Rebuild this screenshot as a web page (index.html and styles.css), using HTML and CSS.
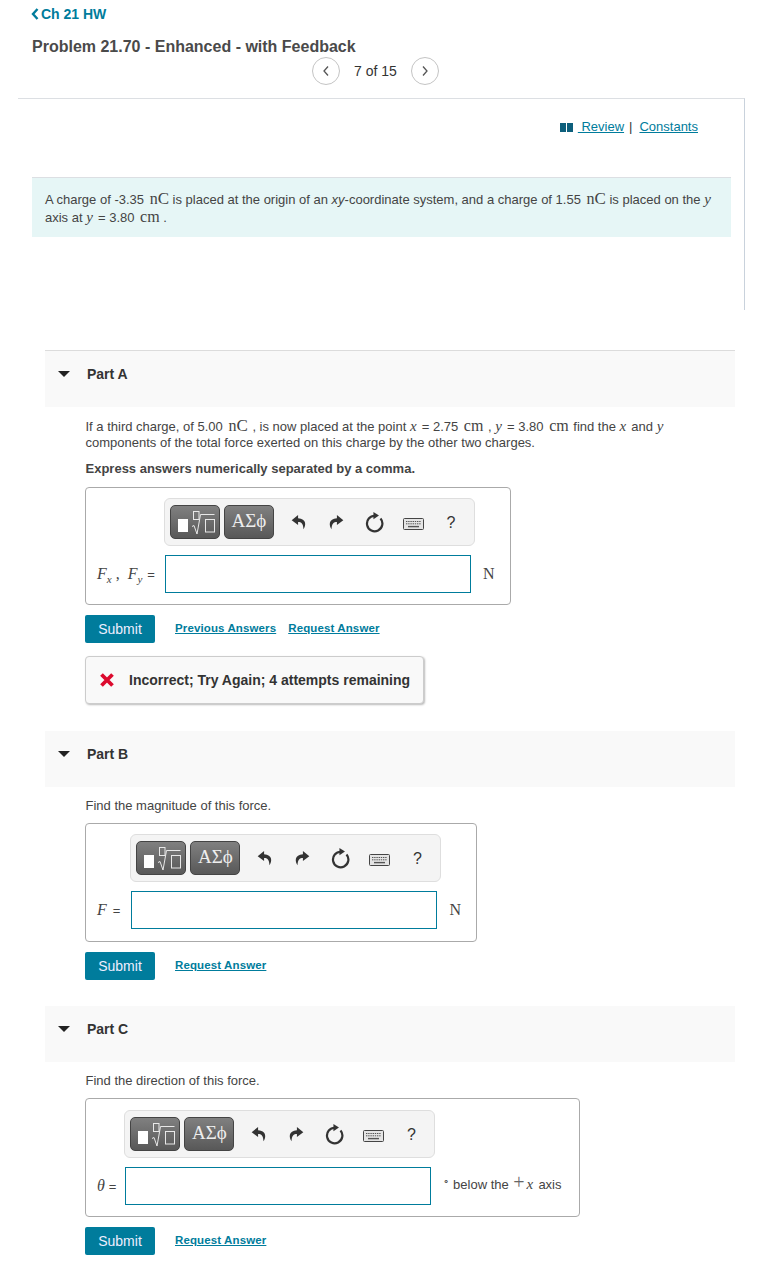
FILE: index.html
```html
<!DOCTYPE html>
<html lang="en">
<head>
<meta charset="UTF-8" />
<meta name="viewport" content="width=device-width, initial-scale=1.0">
<title>Problem 21.70 - Enhanced - with Feedback</title>
<link rel="stylesheet" href="styles.css">
</head>
<body>

<svg class="sprites" width="0" height="0">
  <symbol id="icon-math" viewBox="0 0 50 34">
    <rect x="8" y="14" width="10" height="13" fill="#fff"/>
    <rect x="23.5" y="6.5" width="5.5" height="8" fill="none" stroke="#e8e8e8"/>
    <path d="M22 21.5 L24 20.5 L27 29 L30.5 9.5 H44.5" fill="none" stroke="#e8e8e8"/>
    <rect x="35.5" y="14.5" width="9" height="12.5" fill="none" stroke="#e8e8e8"/>
  </symbol>
  <symbol id="icon-undo" viewBox="0 0 14 14">
    <path d="M6.2 .8 L.6 5.4 L6.2 9.6 V7 C9 7 10.8 8.6 10.9 13.4 C13.2 10.2 13.8 4.2 6.2 3.8 Z" fill="#333"/>
  </symbol>
  <symbol id="icon-redo" viewBox="0 0 14 14">
    <path d="M7.8 .8 L13.4 5.4 L7.8 9.6 V7 C5 7 3.2 8.6 3.1 13.4 C.8 10.2 .2 4.2 7.8 3.8 Z" fill="#333"/>
  </symbol>
  <symbol id="icon-reset" viewBox="0 0 20 20">
    <path d="M15 6.8 A7 7 0 1 1 10 4.4" fill="none" stroke="#333" stroke-width="2"/>
    <path d="M8.6 .8 L13.6 4.2 L8.6 7.6 Z" fill="#333"/>
  </symbol>
  <symbol id="icon-keyboard" viewBox="0 0 21 12">
    <rect x=".5" y=".5" width="20" height="11" rx="1" fill="#e4e4e4" stroke="#444"/>
    <path d="M3 3.5 H18 M3 5.8 H18" stroke="#555" stroke-dasharray="1.4 .8"/>
    <path d="M5 8.6 H16" stroke="#555" stroke-width="1.4"/>
  </symbol>
</svg>

<a class="back-link" href="#">
  <svg width="8" height="12" viewBox="0 0 8 12"><path d="M6.5 1 L2 6 L6.5 11" fill="none" stroke="#007c9c" stroke-width="2.4"/></svg>Ch 21 HW
</a>
<h1 class="problem-title">Problem 21.70 - Enhanced - with Feedback</h1>

<div class="pager">
  <span class="pager-btn">
    <svg width="8" height="12" viewBox="0 0 8 12"><path d="M6 1.5 L2 6 L6 10.5" fill="none" stroke="#555" stroke-width="1.3"/></svg>
  </span>
  <span class="pager-text">7 of 15</span>
  <span class="pager-btn">
    <svg width="8" height="12" viewBox="0 0 8 12"><path d="M2 1.5 L6 6 L2 10.5" fill="none" stroke="#555" stroke-width="1.3"/></svg>
  </span>
</div>

<div class="intro-panel">
  <div class="resources">
    <a href="#"><svg class="book" width="13" height="9" viewBox="0 0 13 9"><path d="M0 0 H6 V9 H0 Z M7 0 H13 V9 H7 Z" fill="#0d5f7c"/></svg> Review</a><span class="sep">|</span><a href="#">Constants</a>
  </div>
  <div class="intro-text">
    A charge of -3.35 <span class="unit">n<span class="big">C</span></span> is placed at the origin of an <i>xy</i>-coordinate system, and a charge of 1.55 <span class="unit">n<span class="big">C</span></span> is placed on the <i class="var">y</i> axis at <i class="var">y</i> = 3.80 <span class="unit">cm</span> .
  </div>
</div>

<section class="part part-first">
  <div class="part-head"><span class="caret"></span>Part A</div>
  <div class="part-body">
    <p class="question">If a third charge, of 5.00 <span class="unit">n<span class="big">C</span></span> , is now placed at the point <i class="var">x</i> = 2.75 <span class="unit">cm</span> , <i class="var">y</i> = 3.80 <span class="unit">cm</span> find the <i class="var">x</i> and <i class="var">y</i> components of the total force exerted on this charge by the other two charges.</p>
    <p class="hint">Express answers numerically separated by a comma.</p>

    <div class="answer answer-a">
      <div class="toolbar">
        <span class="tool-btn"><svg width="50" height="34"><use href="#icon-math"/></svg></span>
        <span class="tool-btn tool-greek">ΑΣϕ</span>
        <span class="tool-icon tool-undo"><svg width="16" height="16"><use href="#icon-undo"/></svg></span>
        <span class="tool-icon"><svg width="16" height="16"><use href="#icon-redo"/></svg></span>
        <span class="tool-icon tool-reset"><svg width="22" height="22"><use href="#icon-reset"/></svg></span>
        <span class="tool-icon tool-keys"><svg width="21" height="12"><use href="#icon-keyboard"/></svg></span>
        <span class="tool-icon tool-help">?</span>
      </div>
      <label class="answer-label"><i>F<sub>x</sub></i> ,&nbsp; <i>F<sub>y</sub></i> <span class="eq">=</span></label>
      <input class="answer-input" type="text">
      <span class="answer-unit"><span class="unit">N</span></span>
    </div>

    <div class="actions">
      <button class="submit">Submit</button>
      <a class="action-link" href="#">Previous Answers</a>
      <a class="action-link" href="#">Request Answer</a>
    </div>

    <div class="feedback">
      <svg width="14" height="14" viewBox="0 0 14 14"><path d="M1.5 1.5 L12.5 12.5 M12.5 1.5 L1.5 12.5" stroke="#dc0a2e" stroke-width="3.8"/></svg>
      Incorrect; Try Again; 4 attempts remaining
    </div>
  </div>
</section>

<section class="part">
  <div class="part-head"><span class="caret"></span>Part B</div>
  <div class="part-body">
    <p class="question">Find the magnitude of this force.</p>

    <div class="answer answer-b">
      <div class="toolbar">
        <span class="tool-btn"><svg width="50" height="34"><use href="#icon-math"/></svg></span>
        <span class="tool-btn tool-greek">ΑΣϕ</span>
        <span class="tool-icon tool-undo"><svg width="16" height="16"><use href="#icon-undo"/></svg></span>
        <span class="tool-icon"><svg width="16" height="16"><use href="#icon-redo"/></svg></span>
        <span class="tool-icon tool-reset"><svg width="22" height="22"><use href="#icon-reset"/></svg></span>
        <span class="tool-icon tool-keys"><svg width="21" height="12"><use href="#icon-keyboard"/></svg></span>
        <span class="tool-icon tool-help">?</span>
      </div>
      <label class="answer-label"><i>F</i> <span class="eq">=</span></label>
      <input class="answer-input" type="text">
      <span class="answer-unit"><span class="unit">N</span></span>
    </div>

    <div class="actions">
      <button class="submit">Submit</button>
      <a class="action-link" href="#">Request Answer</a>
    </div>
  </div>
</section>

<section class="part">
  <div class="part-head"><span class="caret"></span>Part C</div>
  <div class="part-body">
    <p class="question">Find the direction of this force.</p>

    <div class="answer answer-c">
      <div class="toolbar">
        <span class="tool-btn"><svg width="50" height="34"><use href="#icon-math"/></svg></span>
        <span class="tool-btn tool-greek">ΑΣϕ</span>
        <span class="tool-icon tool-undo"><svg width="16" height="16"><use href="#icon-undo"/></svg></span>
        <span class="tool-icon"><svg width="16" height="16"><use href="#icon-redo"/></svg></span>
        <span class="tool-icon tool-reset"><svg width="22" height="22"><use href="#icon-reset"/></svg></span>
        <span class="tool-icon tool-keys"><svg width="21" height="12"><use href="#icon-keyboard"/></svg></span>
        <span class="tool-icon tool-help">?</span>
      </div>
      <label class="answer-label"><i>θ</i> <span class="eq">=</span></label>
      <input class="answer-input" type="text">
      <span class="answer-unit answer-unit-text"><sup class="deg">∘</sup> below the <span class="unit plus">+</span><i class="var">x</i> axis</span>
    </div>

    <div class="actions">
      <button class="submit">Submit</button>
      <a class="action-link" href="#">Request Answer</a>
    </div>
  </div>
</section>

</body>
</html>
```

FILE: styles.css
```css
body {
  font-family: 'Liberation Sans', Arial, sans-serif;
  font-size: 13px;
  line-height: 17px;
  color: #444;
  background: #fff;
  margin: 0;
  padding: 0 0 31px;
}

a {
  color: #007c9c;
}

.sprites {
  display: block;
  height: 0;
}

.back-link {
  display: flex;
  align-items: center;
  gap: 2px;
  height: 16px;
  margin: 6px 0 0 31px;
  font-size: 14px;
  font-weight: bold;
  text-decoration: none;
}

.problem-title {
  margin: 15px 0 0 32px;
  font-size: 16px;
  line-height: 20px;
  font-weight: bold;
  color: #4a4a4a;
}

.pager {
  display: flex;
  align-items: center;
  height: 28px;
  margin: 0 0 0 312px;
}

.pager-btn {
  display: flex;
  align-items: center;
  justify-content: center;
  box-sizing: border-box;
  width: 28px;
  height: 28px;
  border: 1px solid #c4c4c4;
  border-radius: 50%;
}

.pager-text {
  width: 71px;
  text-align: center;
  font-size: 14px;
  color: #333;
}

.intro-panel {
  box-sizing: border-box;
  width: 727px;
  height: 212px;
  margin: 13px 0 0 18px;
  padding: 0 13px 0 14px;
  border-top: 1px solid #dcdfe3;
  border-right: 1px solid #c9d2dc;
}

.resources {
  margin: 19px 33px 0 0;
  text-align: right;
  color: #333;
}

.book {
  margin-right: 5px;
  vertical-align: -0.5px;
}

.sep {
  margin: 0 7px 0 5px;
}

.intro-text {
  height: 60px;
  margin-top: 42px;
  padding: 12px 13px 0;
  box-sizing: border-box;
  background: #e6f6f6;
  border-top: 1px solid #dcdfe3;
}

.unit {
  margin-left: 2px;
  font-family: 'Liberation Serif', serif;
  font-size: 16px;
}

.big {
  font-size: 17px;
}

.question .unit {
  margin-right: 1px;
}

.var {
  font-family: 'Liberation Serif', serif;
  font-size: 15px;
  letter-spacing: 1.5px;
}

.part {
  width: 690px;
  margin: 0 0 0 45px;
}

.part + .part {
  margin-top: 26px;
}

.part-first {
  margin-top: 40px;
  border-top: 1px solid #dcdcdc;
}

.part-head {
  display: flex;
  align-items: flex-start;
  height: 56px;
  padding-top: 15px;
  box-sizing: border-box;
  background: #f9f9f9;
  font-size: 14px;
  font-weight: bold;
  color: #333;
}

.caret {
  width: 0;
  height: 0;
  margin: 5px 17px 0 13px;
  border-left: 6px solid transparent;
  border-right: 6px solid transparent;
  border-top: 6px solid #222;
}

.part-body {
  padding: 11px 0 0 40.5px;
}

.question {
  margin: 0 50px 0 0;
  line-height: 16px;
}

.hint {
  margin: 9px 0 1px;
  font-weight: bold;
}

.answer {
  display: inline-grid;
  grid-template-columns: auto 306px auto;
  align-items: center;
  row-gap: 9px;
  box-sizing: border-box;
  margin: 9px 0 0 -0.5px;
  padding: 10px 15px 11px 11px;
  border: 1px solid #aaa;
  border-radius: 4px;
  vertical-align: top;
}

.answer-b {
  padding-bottom: 12px;
}

.answer-c {
  padding-top: 11px;
  padding-right: 17px;
}

.toolbar {
  grid-column: 2;
  display: flex;
  align-items: center;
  box-sizing: border-box;
  width: 311px;
  height: 48px;
  margin-left: -1px;
  padding-left: 5px;
  background: #f4f4f4;
  border: 1px solid #dedede;
  border-radius: 6px;
}

.tool-btn {
  display: flex;
  align-items: center;
  justify-content: center;
  box-sizing: border-box;
  width: 50px;
  height: 34px;
  margin-right: 4px;
  background: linear-gradient(#808080, #585858);
  border: 1px solid #444;
  border-radius: 5px;
  overflow: hidden;
}

.tool-btn svg {
  flex: none;
}

.tool-greek {
  margin-right: 5px;
  padding-bottom: 3px;
  font-family: 'Liberation Serif', serif;
  font-size: 19px;
  color: #eee;
}

.tool-icon {
  display: flex;
  align-items: center;
  justify-content: center;
  width: 38px;
  height: 34px;
}

.tool-undo svg,
.tool-reset svg {
  margin-left: 2px;
}

.tool-keys svg {
  margin: 3px 0 0 3px;
}

.tool-help {
  padding-left: 1px;
  font-size: 16px;
  color: #333;
}

.answer-label {
  grid-row: 2;
  grid-column: 1;
  padding-right: 10px;
  font-family: 'Liberation Serif', serif;
  font-size: 16px;
  white-space: nowrap;
}

.answer-label sub {
  font-size: 11px;
  line-height: 0;
}

.eq {
  margin-left: 2px;
  font-family: 'Liberation Sans', Arial, sans-serif;
  font-size: 13px;
}

.answer-a .eq {
  margin-left: 1px;
}

.answer-b .answer-label {
  padding-right: 11px;
}

.answer-c .answer-label {
  padding-right: 9px;
}

.answer-c .eq {
  margin-left: 0;
}

.answer-input {
  grid-row: 2;
  grid-column: 2;
  box-sizing: border-box;
  width: 306px;
  height: 38px;
  padding: 0 6px;
  background: #fff;
  border: 1px solid #007c9c;
  border-radius: 0;
}

.answer-unit {
  grid-row: 2;
  grid-column: 3;
  padding-left: 12px;
}

.answer-unit .unit {
  margin-left: 0;
}

.answer-unit-text {
  padding-bottom: 6px;
  white-space: nowrap;
}

.deg {
  font-size: 10px;
  line-height: 0;
}

.answer-unit .plus {
  margin: 0 2px 0 1px;
  font-size: 20px;
  color: #666;
}

.actions {
  display: flex;
  align-items: center;
  gap: 12px;
  margin: 10px 0 0 -0.5px;
}

.submit {
  width: 70px;
  height: 28px;
  margin-right: 8px;
  padding: 0;
  background: #007c9c;
  color: #eef;
  border: none;
  border-radius: 2px;
  font-family: inherit;
  font-size: 14px;
}

.action-link {
  margin-bottom: 2px;
  font-size: 11.5px;
  font-weight: bold;
  letter-spacing: 0.12px;
}

.feedback {
  display: inline-flex;
  align-items: center;
  gap: 15px;
  box-sizing: border-box;
  width: 339px;
  height: 48px;
  margin: 13px 0 1px -0.5px;
  padding-left: 14px;
  background: #f9f9f9;
  border: 1px solid #ccc;
  border-radius: 4px;
  box-shadow: 1px 1px 2px #bbb;
  font-size: 14px;
  font-weight: bold;
  color: #333;
}
```
